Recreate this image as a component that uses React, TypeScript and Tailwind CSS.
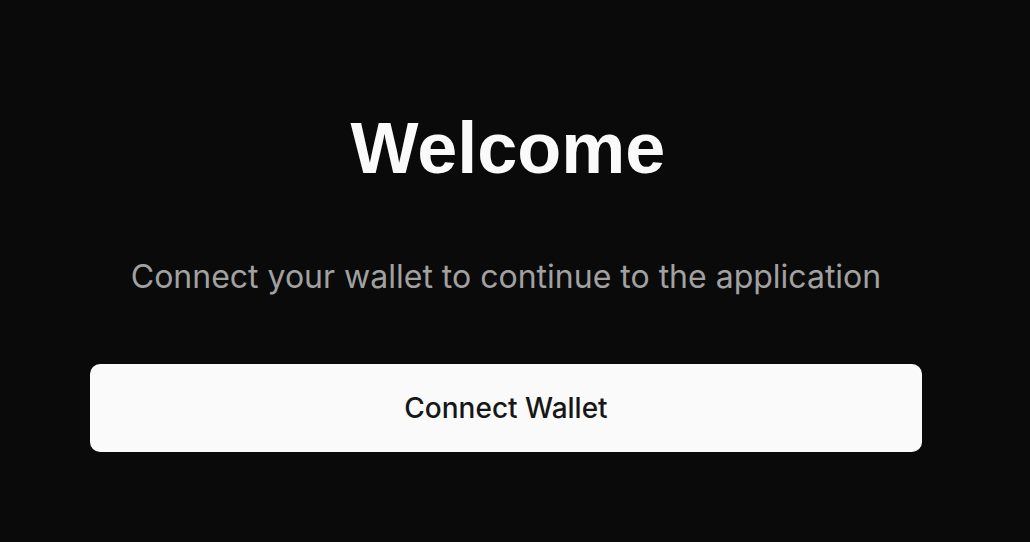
export default function App() {
  return (
    <div className="min-h-screen h-[542px] w-full bg-[#0a0a0a] overflow-hidden">
      <div className="ml-[90px] w-[832px] flex flex-col items-center pt-[112px]">
        <h1 className="pl-[4px] text-[72px] leading-none font-bold text-[#fafafa] font-['Liberation_Sans',Arial,sans-serif]">
          Welcome
        </h1>
        <p className="mt-[77px] text-[32px] leading-none text-[#a1a1a1] font-['Inter',sans-serif]">
          Connect your wallet to continue to the application
        </p>
        <button className="mt-[71px] w-full h-[88px] rounded-[10px] bg-[#fafafa] text-[#171717] text-[28px] font-medium font-['Inter',sans-serif]">
          Connect Wallet
        </button>
      </div>
    </div>
  );
}
